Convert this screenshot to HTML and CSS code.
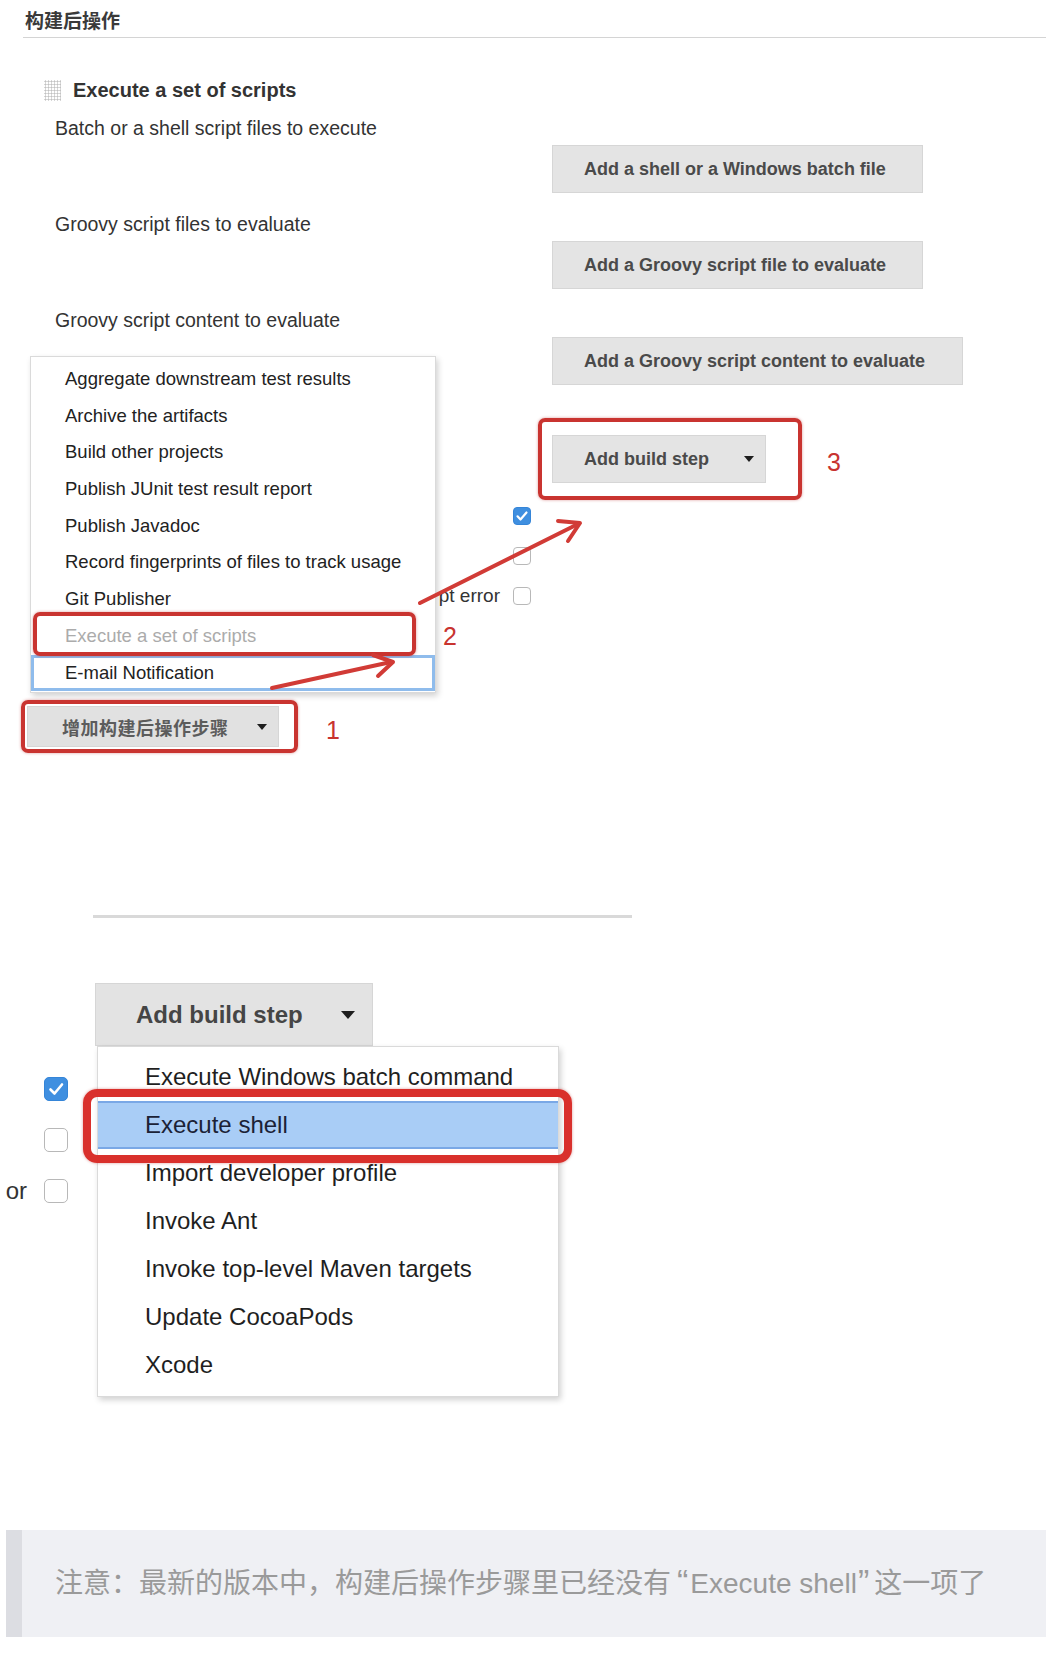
FILE: index.html
```html
<!DOCTYPE html>
<html lang="zh-CN">
<head>
<meta charset="utf-8">
<title>构建后操作</title>
<link rel="stylesheet" href="styles.css">
</head>
<body>
<div class="page">
  <section class="shot1">
    <div class="hdr">构建后操作</div>
    <div class="step">
      <div class="step-title"><span class="handle"></span><span>Execute a set of scripts</span></div>
      <div class="fields">
        <div class="field">
          <div class="label">Batch or a shell script files to execute</div>
          <div class="btn btn-a">Add a shell or a Windows batch file</div>
        </div>
        <div class="field">
          <div class="label">Groovy script files to evaluate</div>
          <div class="btn btn-a">Add a Groovy script file to evaluate</div>
        </div>
        <div class="field">
          <div class="label">Groovy script content to evaluate</div>
          <div class="btn btn-c">Add a Groovy script content to evaluate</div>
        </div>
        <div class="btn btn-step">Add build step<span class="caret"></span></div>
        <div class="opts">
          <div class="opt"><span class="cb checked"><svg viewBox="0 0 18 18" width="18" height="18"><path d="M4.5 9.3l3 3.2 6-7" stroke="#fff" stroke-width="2.2" fill="none" stroke-linecap="round" stroke-linejoin="round"/></svg></span></div>
          <div class="opt"><span class="cb"></span></div>
          <div class="opt"><span class="opt-text">pt error</span><span class="cb"></span></div>
        </div>
      </div>
    </div>
    <div class="btn btn-post"><span class="post-text">增加构建后操作步骤</span><span class="caret"></span></div>

    <ul class="menu menu1">
      <li>Aggregate downstream test results</li>
      <li>Archive the artifacts</li>
      <li>Build other projects</li>
      <li>Publish JUnit test result report</li>
      <li>Publish Javadoc</li>
      <li>Record fingerprints of files to track usage</li>
      <li>Git Publisher</li>
      <li class="dim">Execute a set of scripts</li>
      <li class="focus">E-mail Notification</li>
    </ul>

    <div class="mark mark1"></div>
    <div class="mark mark2"></div>
    <div class="mark mark3"></div>
    <span class="num num1">1</span>
    <span class="num num2">2</span>
    <span class="num num3">3</span>

    <svg class="arrows" width="1046" height="770" viewBox="0 0 1046 770">
      <g stroke="#d13b36" stroke-width="4" stroke-linecap="round" stroke-linejoin="round" fill="none">
        <path d="M420 603 L578 524"/>
        <path d="M558 521 L580 523 L568 541"/>
        <path d="M272 688 L391 662"/>
        <path d="M373 655 L393 662 L378 676"/>
      </g>
    </svg>
  </section>

  <section class="shot2">
    <div class="rule"></div>
    <div class="btn btn-big">Add build step<span class="caret caret-lg"></span></div>
    <div class="opts2">
      <div class="opt2"><span class="cb lg checked"><svg viewBox="0 0 24 24" width="24" height="24"><path d="M6.5 12.5l4 4 7.5-9" stroke="#fff" stroke-width="2.6" fill="none" stroke-linecap="round" stroke-linejoin="round"/></svg></span></div>
      <div class="opt2"><span class="cb lg"></span></div>
      <div class="opt2"><span class="opt2-text">or</span><span class="cb lg"></span></div>
    </div>

    <ul class="menu menu2">
      <li>Execute Windows batch command</li>
      <li class="sel">Execute shell</li>
      <li>Import developer profile</li>
      <li>Invoke Ant</li>
      <li>Invoke top-level Maven targets</li>
      <li>Update CocoaPods</li>
      <li>Xcode</li>
    </ul>
    <div class="mark mark4"></div>
  </section>

  <div class="note"><p class="note-text">注意：最新的版本中，构建后操作步骤里已经没有<span class="q q-open">“</span>Execute shell<span class="q q-close">”</span>这一项了</p></div>
</div>
</body>
</html>
```

FILE: styles.css
```css
* { box-sizing: border-box; }
html, body { margin: 0; padding: 0; background: #fff; }
body {
  font-family: "Liberation Sans", "Noto Sans CJK SC", sans-serif;
  color: #333;
}
.page { width: 1046px; height: 1658px; overflow: hidden; }

/* ---------- first screenshot ---------- */
.shot1 { position: relative; display: flow-root; height: 770px; }

.hdr {
  margin-left: 23px;
  padding: 7px 0 0 2px;
  height: 38px;
  border-bottom: 1px solid #d4d4d4;
  font-family: "Noto Sans CJK SC", sans-serif;
  font-size: 19px;
  line-height: 26px;
  font-weight: 600;
  color: #3a3a3a;
}

.step { margin: 40px 0 0 44px; }
.step-title {
  display: flex;
  align-items: center;
  gap: 12px;
  height: 24px;
  font-size: 20px;
  font-weight: bold;
  color: #333;
}
.handle {
  width: 17px;
  height: 21px;
  background-image: radial-gradient(circle, #c2c2c2 0.9px, transparent 1.2px);
  background-size: 3px 3px;
}

.fields { margin: 16px 0 0 11px; }
.field + .field { margin-top: 21px; }
.label {
  height: 20px;
  font-size: 19.5px;
  line-height: 20px;
  color: #333;
  white-space: nowrap;
}

.btn {
  display: flex;
  align-items: center;
  background: #e4e4e4;
  border: 1px solid #d6d6d6;
  font-weight: bold;
  color: #4a4a4a;
  white-space: nowrap;
}
.fields .btn {
  margin: 7px 0 0 497px;
  height: 48px;
  padding-left: 31px;
  font-size: 18px;
}
.btn-a { width: 371px; }
.btn-c { width: 411px; }
.fields .btn-step { width: 214px; margin-top: 50px; }
.btn-step .caret { margin-left: 35px; }

.caret {
  flex: none;
  width: 0;
  height: 0;
  border-left: 5px solid transparent;
  border-right: 5px solid transparent;
  border-top: 6px solid #1e1e1e;
}
.caret-lg {
  border-left-width: 7px;
  border-right-width: 7px;
  border-top-width: 8px;
}

.opts { margin-top: 13px; width: 476px; }
.opt {
  height: 40px;
  display: flex;
  align-items: center;
  justify-content: flex-end;
  gap: 13px;
}
.opt-text { font-size: 19px; color: #333; }

.cb {
  display: block;
  width: 18px;
  height: 18px;
  border: 1px solid #b8b8b8;
  border-radius: 4px;
  background: #fff;
  position: relative;
}
.cb svg { position: absolute; left: -1px; top: -1px; }
.cb.checked { background: #3f8fe0; border-color: #3585d8; }
.cb.lg { width: 24px; height: 24px; border-radius: 5px; }

.btn-post {
  margin: 90px 0 0 27px;
  width: 252px;
  height: 41px;
  padding-left: 34px;
  background: #e1e1e1;
}
.post-text {
  font-family: "Noto Sans CJK SC", sans-serif;
  font-size: 18px;
  font-weight: 600;
  letter-spacing: 0.5px;
  color: #5c5c5c;
}
.btn-post .caret { margin-left: 28px; }

/* menus */
.menu {
  position: absolute;
  margin: 0;
  padding: 0;
  list-style: none;
  background: #fff;
  border: 1px solid #dadada;
  box-shadow: 2px 3px 6px rgba(0, 0, 0, 0.18);
  white-space: nowrap;
}
.menu1 {
  left: 30px;
  top: 356px;
  width: 406px;
  height: 337px;
  padding-top: 4px;
  font-size: 18.5px;
}
.menu1 li {
  height: 36.7px;
  line-height: 36.7px;
  padding-left: 34px;
  color: #222;
}
.menu1 li.dim { color: #ababab; }
.menu1 li.focus {
  border: 3px solid #8fbcec;
  line-height: 30.7px;
  padding-left: 31px;
}

/* red annotations */
.mark {
  position: absolute;
  border: 4px solid #c93430;
  border-radius: 7px;
  box-shadow: 0 0 3px rgba(180, 30, 30, 0.45);
}
.mark1 { left: 21px; top: 700px; width: 277px; height: 53px; }
.mark2 { left: 33px; top: 612px; width: 383px; height: 44px; }
.mark3 { left: 538px; top: 418px; width: 264px; height: 82px; }

.num {
  position: absolute;
  font-size: 25px;
  line-height: 30px;
  color: #c8332f;
}
.num1 { left: 326px; top: 715px; }
.num2 { left: 443px; top: 621px; }
.num3 { left: 827px; top: 447px; }

.arrows { position: absolute; left: 0; top: 0; pointer-events: none; }

/* ---------- second screenshot ---------- */
.shot2 { position: relative; display: flow-root; height: 650px; }
.rule {
  margin: 145px 0 0 93px;
  width: 539px;
  height: 3px;
  background: #d9d9d9;
}
.btn-big {
  margin: 65px 0 0 95px;
  width: 278px;
  height: 63px;
  padding-left: 40px;
  font-size: 24px;
  color: #454545;
  background: #e3e3e3;
}
.btn-big .caret { margin-left: 38px; }

.opts2 { margin-top: 17px; width: 68px; }
.opt2 {
  height: 51px;
  display: flex;
  align-items: center;
  justify-content: flex-end;
  gap: 17px;
}
.opt2-text { font-size: 24px; color: #333; }

.menu2 {
  left: 97px;
  top: 276px;
  width: 462px;
  height: 351px;
  padding-top: 6px;
  font-size: 24px;
}
.menu2 li {
  height: 48px;
  line-height: 48px;
  padding-left: 47px;
  color: #1f1f1f;
}
.menu2 li.sel {
  background: #a9cdf6;
  border-top: 2px solid #7aa8e6;
  border-bottom: 2px solid #7aa8e6;
  line-height: 44px;
  color: #1b2236;
}
.mark4 {
  left: 83px;
  top: 319px;
  width: 489px;
  height: 74px;
  border-width: 8px;
  border-radius: 14px;
  border-color: #d9302c;
}

/* ---------- note ---------- */
.note {
  margin: 110px 0 0 6px;
  height: 107px;
  display: flex;
  align-items: center;
  padding-left: 33px;
  background: #eff0f4;
  border-left: 16px solid #dcdde2;
}
.note-text {
  margin: 0;
  font-size: 28px;
  line-height: 36px;
  color: #9a9a9a;
  white-space: nowrap;
}
.q { font-family: "Liberation Sans", sans-serif; font-size: 34px; line-height: 20px; }
.q-open { margin: 0 2px 0 6px; }
.q-close { margin: 0 5px 0 1px; }
```
